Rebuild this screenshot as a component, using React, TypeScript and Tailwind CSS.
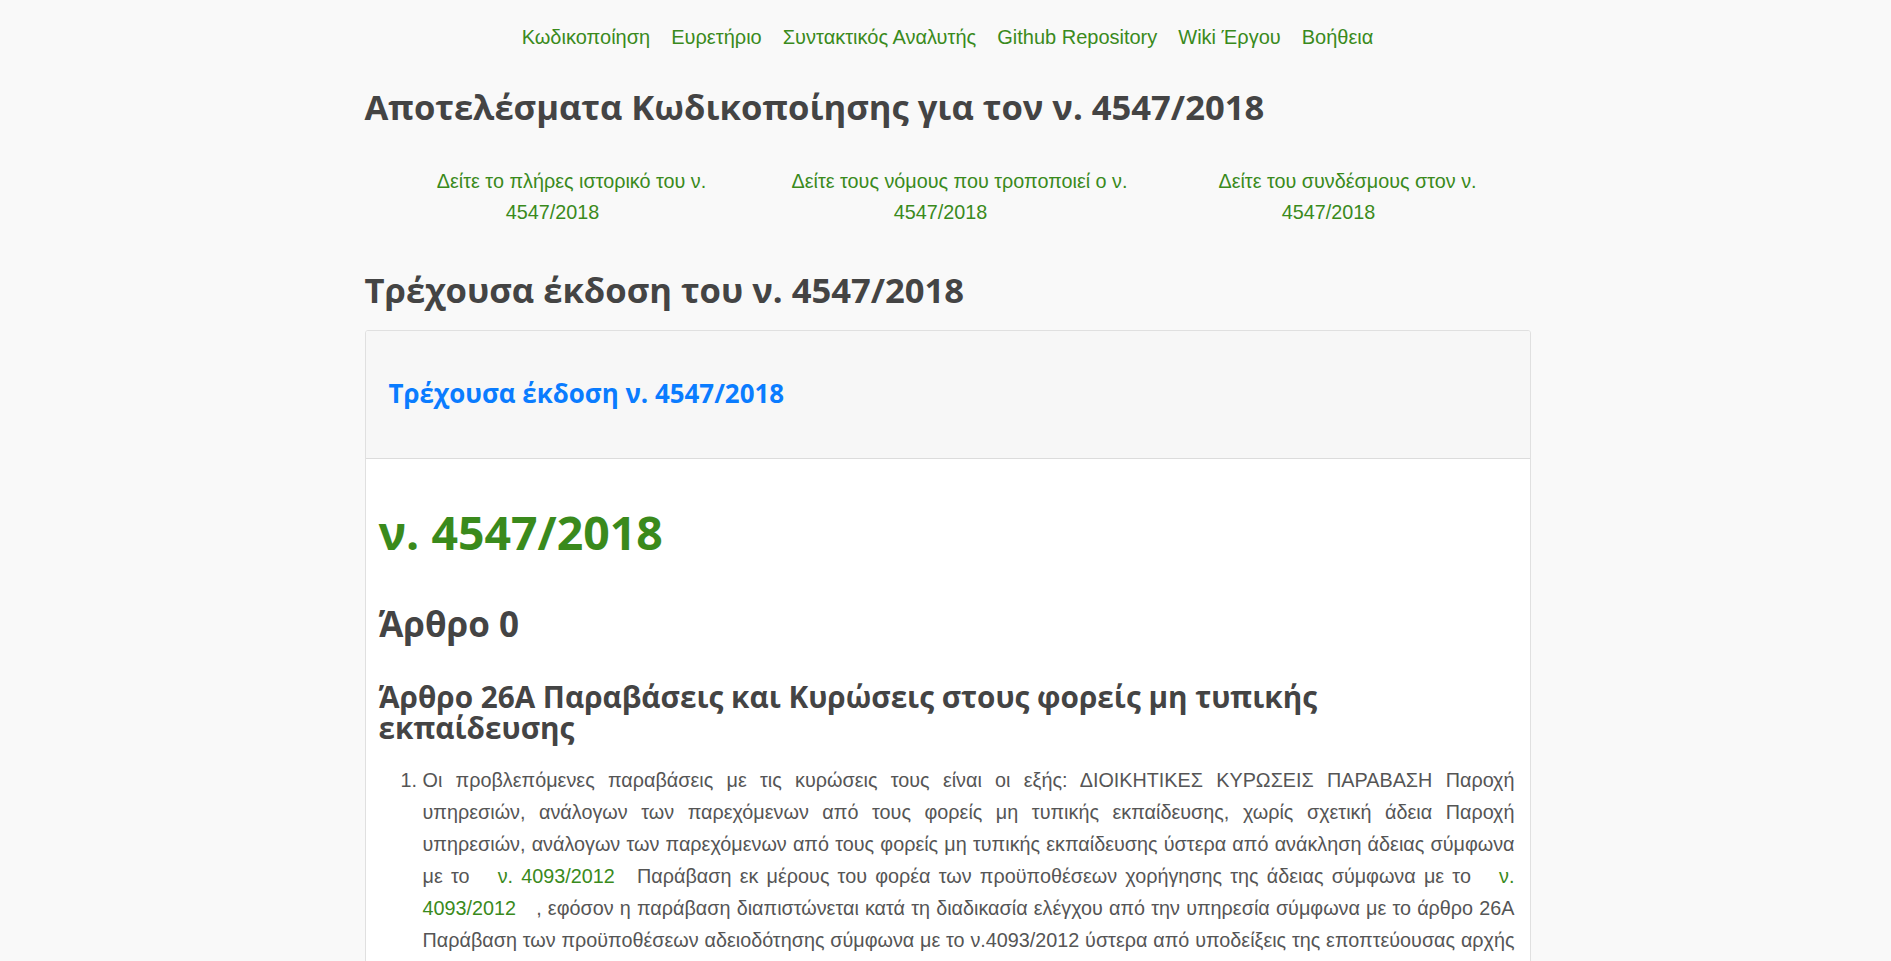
import React from "react";

const navItems = [
  "Κωδικοποίηση",
  "Ευρετήριο",
  "Συντακτικός Αναλυτής",
  "Github Repository",
  "Wiki Έργου",
  "Βοήθεια",
];

const links = [
  "Δείτε το πλήρες ιστορικό του ν.",
  "Δείτε τους νόμους που τροποποιεί ο ν.",
  "Δείτε του συνδέσμους στον ν.",
];

const heading = { fontFamily: '"Open Sans", "Noto Sans", sans-serif' };
const body = { fontFamily: '"Liberation Sans", Arial, sans-serif' };

export default function App() {
  return (
    <div className="min-h-screen bg-[#f9f9f9] text-[#555]" style={body}>
      <nav className="flex justify-center gap-[21px] pt-[25px] pl-[4px] text-[20px] leading-[24px] text-[#3a8a1c]">
        {navItems.map((n) => (
          <a key={n} href="#" className="hover:underline">
            {n}
          </a>
        ))}
      </nav>

      <div className="mx-auto w-[1170px] pl-[4px]">
        <h2
          className="mt-[39px] text-[34.6px] font-bold leading-[38px] text-[#444]"
          style={heading}
        >
          Αποτελέσματα Κωδικοποίησης για τον ν. 4547/2018
        </h2>

        <div className="mt-[40px] -ml-[6px] grid w-[1164px] grid-cols-3 text-[19.8px] leading-[31px] text-[#3a8a1c]">
          {links.map((l) => (
            <a key={l} href="#" className="flex flex-col items-center">
              <span className="pl-[38px]">{l}</span>
              <span>4547/2018</span>
            </a>
          ))}
        </div>

        <h2
          className="mt-[43px] text-[34.6px] font-bold leading-[38px] text-[#444]"
          style={heading}
        >
          Τρέχουσα έκδοση του ν. 4547/2018
        </h2>

        <div className="mt-[21px] w-[1166px] overflow-hidden rounded-[3px] border border-[#e0e0e0] bg-white">
          <div className="flex h-[128px] items-center border-b border-[#dcdcdc] bg-[#f7f7f7] px-[23px] pb-[3px]">
            <a
              href="#"
              className="text-[25.9px] font-bold leading-[31px] text-[#0a7cff]"
              style={heading}
            >
              Τρέχουσα έκδοση ν. 4547/2018
            </a>
          </div>

          <div className="pl-[13px] pr-[15px] pt-[46px] pb-[40px]">
            <h1
              className="text-[46.4px] font-bold leading-[54px] text-[#3a8a1c]"
              style={heading}
            >
              ν. 4547/2018
            </h1>
            <h2
              className="mt-[46px] text-[35px] font-bold leading-[38px] text-[#444]"
              style={heading}
            >
              Άρθρο 0
            </h2>
            <h3
              className="mt-[38px] text-[29.7px] font-bold leading-[31px] text-[#444]"
              style={heading}
            >
              Άρθρο 26Α Παραβάσεις και Κυρώσεις στους φορείς μη τυπικής
              εκπαίδευσης
            </h3>
            <ol className="mt-[21px] list-decimal pl-[44px] text-justify text-[19.8px] leading-[32px] text-[#555]">
              <li>
                Οι προβλεπόμενες παραβάσεις με τις κυρώσεις τους είναι οι εξής:
                ΔΙΟΙΚΗΤΙΚΕΣ ΚΥΡΩΣΕΙΣ ΠΑΡΑΒΑΣΗ Παροχή υπηρεσιών, ανάλογων των
                παρεχόμενων από τους φορείς μη τυπικής εκπαίδευσης, χωρίς
                σχετική άδεια Παροχή υπηρεσιών, ανάλογων των παρεχόμενων από
                τους φορείς μη τυπικής εκπαίδευσης ύστερα από ανάκληση άδειας
                σύμφωνα με το{" "}
                <a href="#" className="pl-[20px] pr-[14px] text-[#3a8a1c]">
                  ν. 4093/2012
                </a>{" "}
                Παράβαση εκ μέρους του φορέα των προϋποθέσεων χορήγησης της
                άδειας σύμφωνα με το{" "}
                <a href="#" className="pl-[20px] pr-[14px] text-[#3a8a1c]">
                  ν. 4093/2012
                </a>{" "}
                , εφόσον η παράβαση διαπιστώνεται κατά τη διαδικασία ελέγχου από
                την υπηρεσία σύμφωνα με το άρθρο 26Α Παράβαση των προϋποθέσεων
                αδειοδότησης σύμφωνα με το ν.4093/2012 ύστερα από υποδείξεις της
                εποπτεύουσας αρχής Παράβαση της υποχρέωσης ενημέρωσης της
                υπηρεσίας για κάθε μεταβολή των στοιχείων του φορέα.
              </li>
            </ol>
          </div>
        </div>
      </div>
    </div>
  );
}
